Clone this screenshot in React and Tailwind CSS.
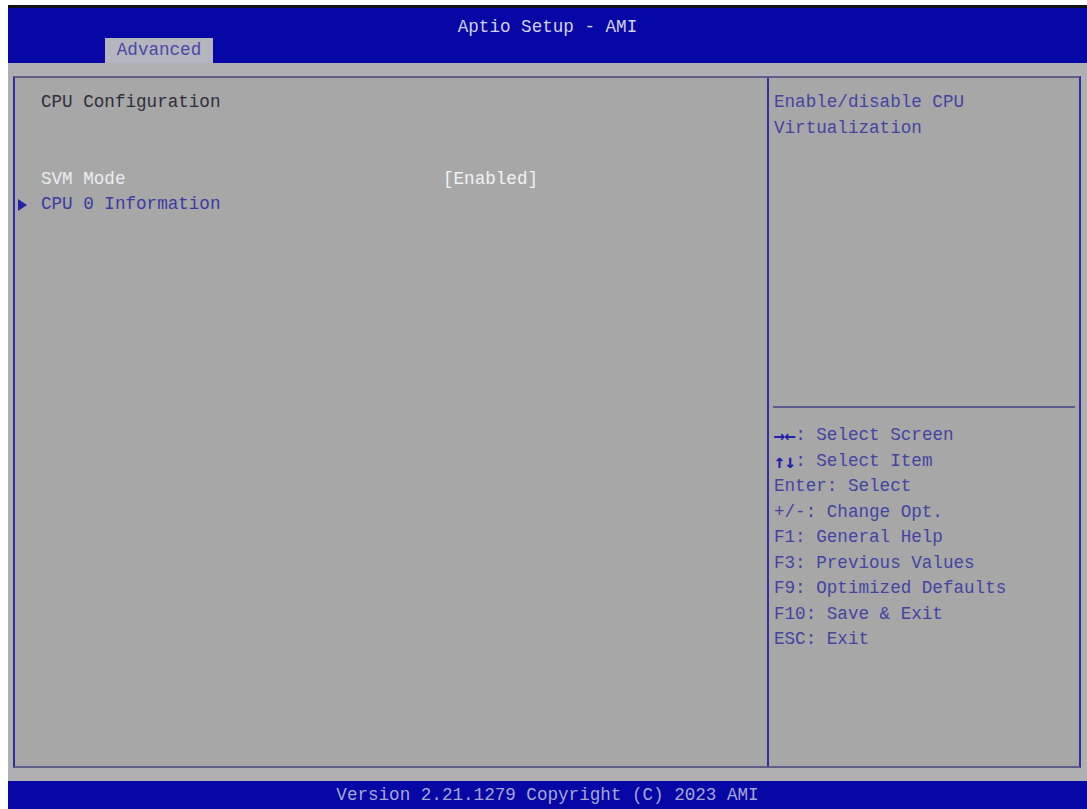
import React from "react";

const mono = { fontFamily: '"Liberation Mono", "DejaVu Sans Mono", monospace' };
const dv = { fontFamily: '"DejaVu Sans Mono", monospace' };

function HelpLine({ k, rest }) {
  return (
    <div className="h-[25.5px] leading-[25.5px] whitespace-pre flex">
      {k}
      <span>{rest}</span>
    </div>
  );
}

function Keys({ a, b }) {
  return (
    <span className="flex text-[#2020a8] font-bold text-[19px]" style={dv}>
      <span className="w-[10.6px] flex justify-center">{a}</span>
      <span className="w-[10.6px] flex justify-center">{b}</span>
    </span>
  );
}

export default function App() {
  return (
    <div
      className="w-[1087px] h-[809px] bg-white pt-[5px] pl-[8px] overflow-hidden text-[17.6px]"
      style={mono}
    >
      <div className="w-[1079px] flex flex-col">
        {/* Header */}
        <div className="h-[58px] border-t-[3px] border-[#101018] bg-[#0707a6] flex flex-col">
          <div className="h-[30px] pt-[8px] flex items-center justify-center text-[#d2d2ea] whitespace-pre">
            Aptio Setup - AMI
          </div>
          <div className="h-[25px] flex">
            <div className="ml-[97px] w-[108px] h-[25px] bg-[#b5b5bd] text-[#4848a8] flex items-center justify-center">
              Advanced
            </div>
          </div>
        </div>

        {/* Body */}
        <div className="bg-[#afafb4] pt-[13px] pb-[13px] pl-[5px]">
          <div className="w-[1068px] h-[692px] bg-[#a7a7a8] border-2 border-x-[#30309c] border-y-[#5e5e88] flex">
            {/* Left column */}
            <div className="w-[754px] h-full border-r-2 border-[#30309c] pt-[12px] pl-[3px]">
              <div className="h-[25.5px] leading-[25.5px] pl-[23px] text-[#2e2e3a]">CPU Configuration</div>
              <div className="h-[25.5px]" />
              <div className="h-[25.5px]" />
              <div className="h-[25.5px] leading-[25.5px] flex">
                <span className="w-[23px]" />
                <span className="w-[402px] text-[#ececf0]">SVM Mode</span>
                <span className="text-[#f2f2f4]">[Enabled]</span>
              </div>
              <div className="h-[25.5px] leading-[25.5px] flex">
                <span className="w-[23px] flex items-center">
                  <svg width="9" height="12" viewBox="0 0 9 12">
                    <polygon points="0,0 9,6 0,12" fill="#2424a4" />
                  </svg>
                </span>
                <span className="text-[#3a3aa0]">CPU 0 Information</span>
              </div>
            </div>

            {/* Right column */}
            <div className="flex-1 h-full flex flex-col">
              <div className="h-[328px] pt-[12px] pl-[5px] text-[#4444a0]">
                <div className="h-[25.5px] leading-[25.5px]">Enable/disable CPU</div>
                <div className="h-[25.5px] leading-[25.5px]">Virtualization</div>
              </div>
              <div className="ml-[4px] mr-[4px] h-[2px] bg-[#5a5a8c]" />
              <div className="pt-[15px] pl-[5px] text-[#4444a0]">
                <HelpLine k={<Keys a="→" b="←" />} rest=": Select Screen" />
                <HelpLine k={<Keys a="↑" b="↓" />} rest=": Select Item" />
                <HelpLine rest="Enter: Select" />
                <HelpLine rest="+/-: Change Opt." />
                <HelpLine rest="F1: General Help" />
                <HelpLine rest="F3: Previous Values" />
                <HelpLine rest="F9: Optimized Defaults" />
                <HelpLine rest="F10: Save & Exit" />
                <HelpLine rest="ESC: Exit" />
              </div>
            </div>
          </div>
        </div>

        {/* Footer */}
        <div className="h-[28px] bg-[#0707a6] flex items-center justify-center text-[#a6a6d6] whitespace-pre">
          Version 2.21.1279 Copyright (C) 2023 AMI
        </div>
      </div>
    </div>
  );
}
